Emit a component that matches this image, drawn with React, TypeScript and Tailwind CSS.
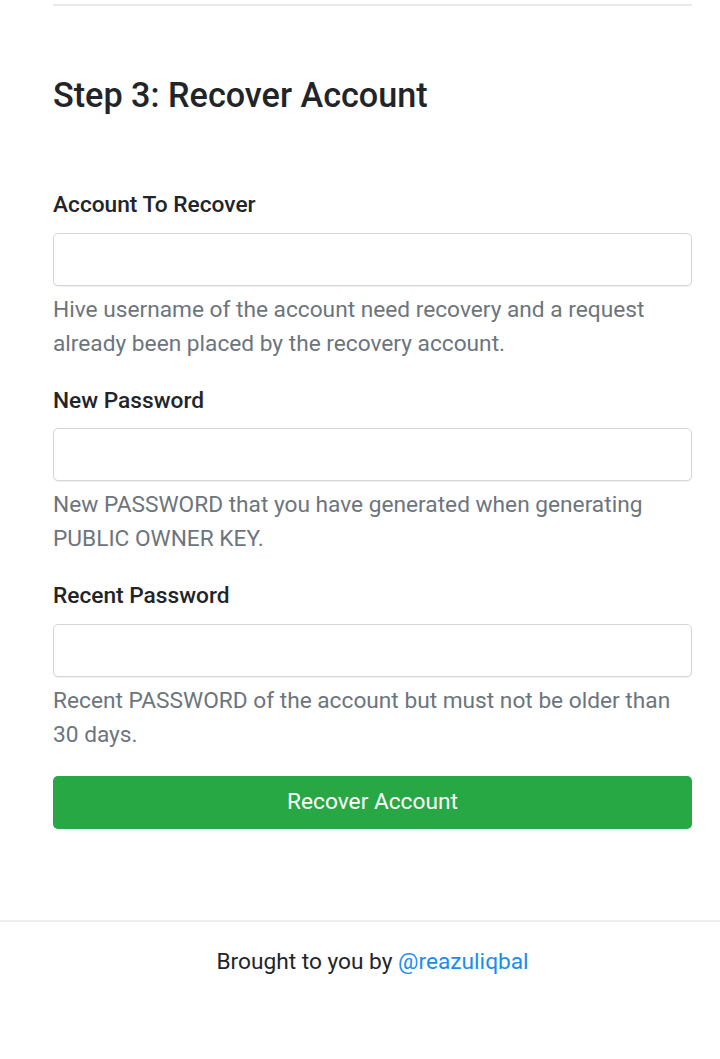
import React from "react";

const font = { fontFamily: "Roboto, 'Noto Sans', sans-serif" };

function Field({ label, help }: { label: string; help: string }) {
  return (
    <div className="mb-[24px]">
      <label className="block text-[22.7px] leading-[31.5px] font-medium text-[#212529] mb-[12px]">{label}</label>
      <input
        type="text"
        className="block w-full h-[53px] rounded-[5px] border border-[#d6d6d6] bg-white px-3 outline-none shadow-[0_1px_1px_rgba(0,0,0,0.06)]"
      />
      <div className="mt-[7px] text-[22.7px] leading-[34px] text-[#6c757d]">{help}</div>
    </div>
  );
}

export default function App() {
  return (
    <div className="bg-white min-h-[1059px] text-[#212529]" style={font}>
      <div className="pl-[53px] pr-[28px] pt-[4px]">
        <div className="border-t-2 border-[#e9e9e9]" />
        <h2 className="mt-[68px] text-[34.2px] leading-[42px] font-medium text-[#212529]">Step 3: Recover Account</h2>
        <div className="mt-[73px]">
          <Field
            label="Account To Recover"
            help="Hive username of the account need recovery and a request already been placed by the recovery account."
          />
          <Field
            label="New Password"
            help="New PASSWORD that you have generated when generating PUBLIC OWNER KEY."
          />
          <Field
            label="Recent Password"
            help="Recent PASSWORD of the account but must not be older than 30 days."
          />
          <button className="block w-full h-[53px] rounded-[5px] bg-[#28a745] text-white text-[22.7px]">
            Recover Account
          </button>
        </div>
      </div>
      <div className="mt-[91px] border-t-2 border-[#eeeeee] pt-[23px] pl-[53px] pr-[28px] text-center text-[22.7px] leading-[34px] text-[#212529]">
        Brought to you by <span className="text-[#1a8cf0]">@reazuliqbal</span>
      </div>
    </div>
  );
}
